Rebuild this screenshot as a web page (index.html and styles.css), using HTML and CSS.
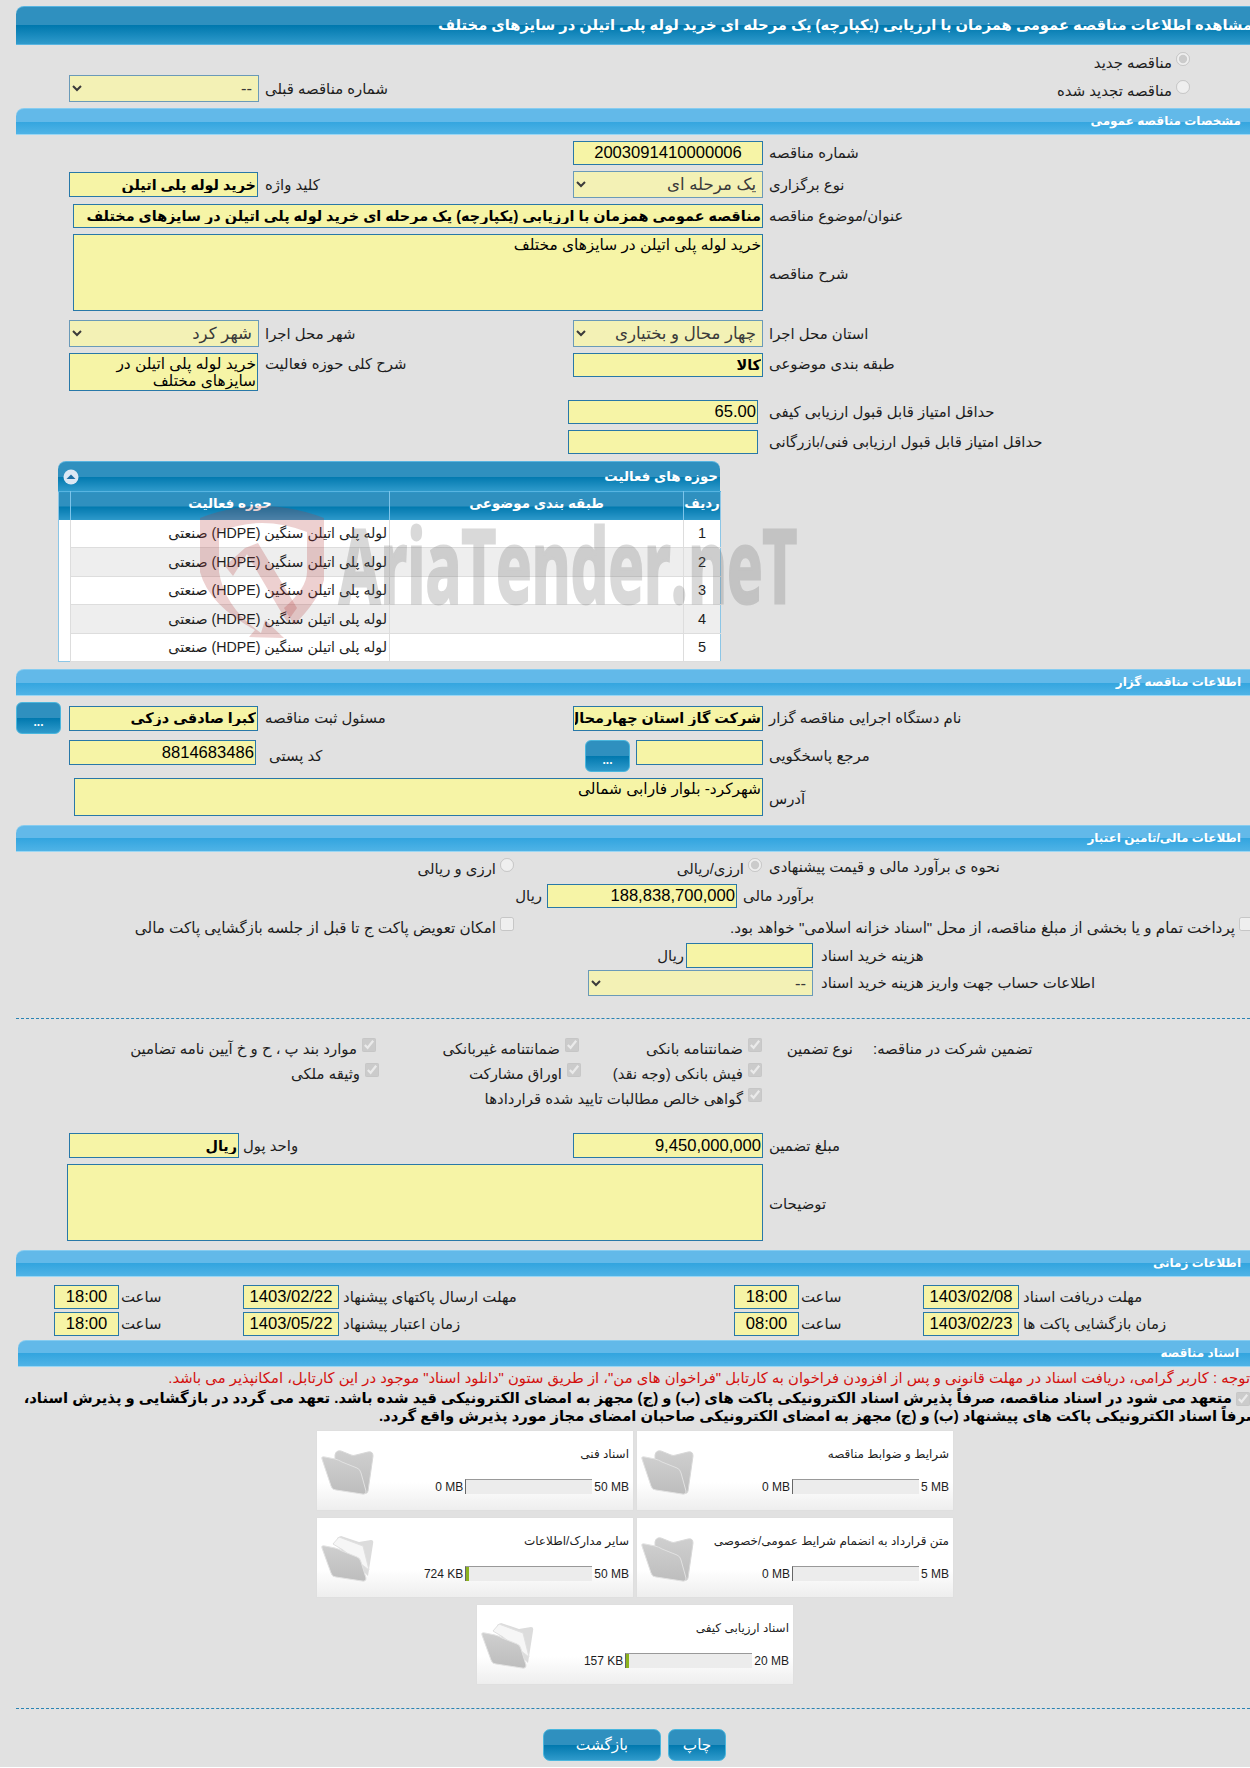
FILE: index.html
```html
<!DOCTYPE html>
<html lang="fa">
<head>
    <meta charset="UTF-8">
    <title>مشاهده اطلاعات مناقصه</title>
    <link rel="stylesheet" href="styles.css">
</head>
<body>
<div class="page">
<main class="wrap">

    <h1 class="title-bar"><span>مشاهده اطلاعات مناقصه عمومی همزمان با ارزیابی (یکپارچه) یک مرحله ای خرید لوله پلی اتیلن در سایزهای مختلف</span></h1>

    <div class="choice-row choice-first">
        <label class="choice"><input type="radio" name="kind" disabled checked><span>مناقصه جدید</span></label>
    </div>
    <div class="grid-row mt-9">
        <select class="field w-190" dir="rtl" disabled><option>--</option></select>
        <label class="cap">شماره مناقصه قبلی</label>
        <span></span>
        <label class="choice choice-renew"><input type="radio" name="kind" disabled><span>مناقصه تجدید شده</span></label>
    </div>

    <h2 class="section mt-6">مشخصات مناقصه عمومی</h2>

    <div class="grid-row mt-6">
        <span></span><span></span>
        <input class="field num center" dir="rtl" readonly value="2003091410000006">
        <label class="cap">شماره مناقصه</label>
    </div>
    <div class="grid-row mt-6 row-27">
        <input class="field w-189 h-25 heavy" dir="rtl" readonly value="خرید لوله پلی اتیلن">
        <label class="cap">کلید واژه</label>
        <select class="field" dir="rtl" disabled><option>یک مرحله ای</option></select>
        <label class="cap">نوع برگزاری</label>
    </div>
    <div class="grid-row mt-6">
        <input class="field span-3 w-690 heavy" dir="rtl" readonly value="مناقصه عمومی همزمان با ارزیابی (یکپارچه) یک مرحله ای خرید لوله پلی اتیلن در سایزهای مختلف">
        <label class="cap">عنوان/موضوع مناقصه</label>
    </div>
    <div class="grid-row mt-6">
        <textarea class="field span-3 w-690 h-77" dir="rtl" readonly>خرید لوله پلی اتیلن در سایزهای مختلف</textarea>
        <label class="cap cap-down">شرح مناقصه</label>
    </div>
    <div class="grid-row mt-9 row-27">
        <select class="field w-190" dir="rtl" disabled><option>شهر کرد</option></select>
        <label class="cap">شهر محل اجرا</label>
        <select class="field" dir="rtl" disabled><option>چهار محال و بختیاری</option></select>
        <label class="cap">استان محل اجرا</label>
    </div>
    <div class="grid-row mt-6 row-top">
        <textarea class="field w-189 h-38" dir="rtl" readonly>خرید لوله پلی اتیلن در سایزهای مختلف</textarea>
        <label class="cap">شرح کلی حوزه فعالیت</label>
        <input class="field heavy" dir="rtl" readonly value="کالا">
        <label class="cap">طبقه بندی موضوعی</label>
    </div>
    <div class="grid-row mt-9">
        <span></span><span></span>
        <input class="field num shift-5" dir="rtl" readonly value="65.00">
        <label class="cap">حداقل امتیاز قابل قبول ارزیابی کیفی</label>
    </div>
    <div class="grid-row mt-6">
        <span></span><span></span>
        <input class="field shift-5" dir="rtl" readonly>
        <label class="cap">حداقل امتیاز قابل قبول ارزیابی فنی/بازرگانی</label>
    </div>

    <section class="activity">
        <div class="activity-head">
            <svg class="collapse" viewBox="0 0 16 16"><circle cx="8" cy="8" r="7.5" fill="#dce8f4"/><path d="M3.5 10 L8 5.5 L12.5 10 Z" fill="#1d6fa5"/></svg>
            <span>حوزه های فعالیت</span>
        </div>
        <table class="activity-table" dir="rtl">
            <thead>
                <tr><th class="c-idx">ردیف</th><th class="c-cat">طبقه بندی موضوعی</th><th class="c-act">حوزه فعالیت</th><th class="c-pad"></th></tr>
            </thead>
            <tbody>
                <tr><td class="c-idx">1</td><td></td><td>لوله پلی اتیلن سنگین (HDPE) صنعتی</td><td class="c-pad"></td></tr>
                <tr><td class="c-idx">2</td><td></td><td>لوله پلی اتیلن سنگین (HDPE) صنعتی</td><td class="c-pad"></td></tr>
                <tr><td class="c-idx">3</td><td></td><td>لوله پلی اتیلن سنگین (HDPE) صنعتی</td><td class="c-pad"></td></tr>
                <tr><td class="c-idx">4</td><td></td><td>لوله پلی اتیلن سنگین (HDPE) صنعتی</td><td class="c-pad"></td></tr>
                <tr><td class="c-idx">5</td><td></td><td>لوله پلی اتیلن سنگین (HDPE) صنعتی</td><td class="c-pad"></td></tr>
            </tbody>
        </table>
        <svg class="watermark" viewBox="0 0 600 140">
            <g fill="#b43c3c" fill-opacity="0.24">
                <path d="M1 18 Q62 -6 125 18 L125 80 Q120 100 95 125 L85 108 Q108 88 108 72 L108 32 Q62 14 20 32 L20 72 Q26 108 62 133 L66 120 L85 138 L50 137 L56 130 Q10 105 1 72 Z"/>
                <path d="M46 48 L59 43 L98 108 L88 122 L48 54 L34 76 L26 66 Z"/>
            </g>
            <text class="watermark-text" x="140" y="103" textLength="458" lengthAdjust="spacingAndGlyphs">AriaTender.neT</text>
        </svg>
    </section>

    <h2 class="section mt-7">اطلاعات مناقصه گزار</h2>

    <div class="grid-row mt-6 row-32">
        <div class="with-btn">
            <button class="dots" type="button">...</button>
            <input class="field w-189 heavy h-25" dir="rtl" readonly value="کبرا صادقی دزکی">
        </div>
        <label class="cap">مسئول ثبت مناقصه</label>
        <input class="field heavy h-25" dir="rtl" readonly value="شرکت گاز استان چهارمحال و بختیاری">
        <label class="cap">نام دستگاه اجرایی مناقصه گزار</label>
    </div>
    <div class="grid-row mt-6 row-32 row-top">
        <input class="field num w-187 mt-3 h-25" dir="rtl" readonly value="8814683486">
        <label class="cap cap-low cap-postal">کد پستی</label>
        <div class="with-btn with-btn-right">
            <button class="dots" type="button">...</button>
            <input class="field w-127 h-25" dir="rtl" readonly>
        </div>
        <label class="cap cap-low">مرجع پاسخگویی</label>
    </div>
    <div class="grid-row mt-6">
        <textarea class="field span-3 w-689 h-38" dir="rtl" readonly>شهرکرد- بلوار فارابی شمالی</textarea>
        <label class="cap cap-down">آدرس</label>
    </div>

    <h2 class="section mt-9">اطلاعات مالی/تامین اعتبار</h2>

    <div class="pick-row pick-radio mt-6 h-16">
        <label class="choice"><input type="radio" name="cur" disabled><span>ارزی و ریالی</span></label>
        <label class="choice"><input type="radio" name="cur" disabled checked><span>ارزی/ریالی</span></label>
        <label class="cap cap-7">نحوه ی برآورد مالی و قیمت پیشنهادی</label>
    </div>
    <div class="unit-row unit-estimate mt-10">
        <span class="cap unit">ریال</span>
        <input class="field num" dir="rtl" readonly value="188,838,700,000">
        <label class="cap">برآورد مالی</label>
    </div>
    <div class="pick-row pick-check mt-9 h-14">
        <label class="choice"><input type="checkbox" disabled><span>امکان تعویض پاکت ج تا قبل از جلسه بازگشایی پاکت مالی</span></label>
        <label class="choice"><input type="checkbox" disabled><span>پرداخت تمام و یا بخشی از مبلغ مناقصه، از محل "اسناد خزانه اسلامی" خواهد بود.</span></label>
    </div>
    <div class="unit-row unit-cost mt-12">
        <span class="cap unit unit-near">ریال</span>
        <input class="field w-127 h-25" dir="rtl" readonly>
        <label class="cap cap-8">هزینه خرید اسناد</label>
    </div>
    <div class="unit-row unit-account mt-2">
        <span></span>
        <select class="field w-225 h-26" dir="rtl" disabled><option>--</option></select>
        <label class="cap cap-8">اطلاعات حساب جهت واریز هزینه خرید اسناد</label>
    </div>

    <hr class="dotted rule-top">

    <div class="guarantee" dir="ltr">
        <label class="check"><input type="checkbox" disabled checked><span>موارد بند پ ، ح و خ آیین نامه تضامین</span></label>
        <label class="check"><input type="checkbox" disabled checked><span>ضمانتنامه غیربانکی</span></label>
        <label class="check"><input type="checkbox" disabled checked><span>ضمانتنامه بانکی</span></label>
        <label class="cap cap-type">نوع تضمین</label>
        <label class="cap cap-guar">تضمین شرکت در مناقصه:</label>

        <label class="check check-out-3"><input type="checkbox" disabled checked><span>وثیقه ملکی</span></label>
        <label class="check check-out-2"><input type="checkbox" disabled checked><span>اوراق مشارکت</span></label>
        <label class="check"><input type="checkbox" disabled checked><span>فیش بانکی (وجه نقد)</span></label>
        <span></span><span></span>

        <span></span><span></span>
        <label class="check"><input type="checkbox" disabled checked><span>گواهی خالص مطالبات تایید شده قراردادها</span></label>
    </div>

    <div class="grid-row mt-30">
        <input class="field w-170 h-25 heavy" dir="rtl" readonly value="ریال">
        <label class="cap cap-unit">واحد پول</label>
        <input class="field num h-25" dir="rtl" readonly value="9,450,000,000">
        <label class="cap">مبلغ تضمین</label>
    </div>
    <div class="grid-row mt-6">
        <textarea class="field span-3 w-696 h-77" dir="rtl" readonly></textarea>
        <label class="cap cap-down">توضیحات</label>
    </div>

    <h2 class="section mt-9">اطلاعات زمانی</h2>

    <div class="dates mt-8">
        <input class="field time num" dir="rtl" readonly value="18:00">
        <label class="cap cap-2">ساعت</label>
        <input class="field date num" dir="rtl" readonly value="1403/02/22">
        <label class="cap cap-3">مهلت ارسال پاکتهای پیشنهاد</label>
        <input class="field time num" dir="rtl" readonly value="18:00">
        <label class="cap cap-2">ساعت</label>
        <input class="field date num" dir="rtl" readonly value="1403/02/08">
        <label class="cap cap-3">مهلت دریافت اسناد</label>
    </div>
    <div class="dates mt-3">
        <input class="field time num" dir="rtl" readonly value="18:00">
        <label class="cap cap-2">ساعت</label>
        <input class="field date num" dir="rtl" readonly value="1403/05/22">
        <label class="cap cap-3">زمان اعتبار پیشنهاد</label>
        <input class="field time num" dir="rtl" readonly value="08:00">
        <label class="cap cap-2">ساعت</label>
        <input class="field date num" dir="rtl" readonly value="1403/02/23">
        <label class="cap cap-3">زمان بازگشایی پاکت ها</label>
    </div>

    <h2 class="section section-docs mt-4">اسناد مناقصه</h2>

    <p class="notice-red" dir="rtl">توجه : کاربر گرامی، دریافت اسناد در مهلت قانونی و پس از افزودن فراخوان به کارتابل "فراخوان های من"، از طریق ستون "دانلود اسناد" موجود در این کارتابل، امکانپذیر می باشد.</p>
    <p class="notice-bold" dir="rtl"><input type="checkbox" disabled checked>متعهد می شود در اسناد مناقصه، صرفاً پذیرش اسناد الکترونیکی پاکت های (ب) و (ج) مجهز به امضای الکترونیکی قید شده باشد. تعهد می گردد در بازگشایی و پذیرش اسناد،<br>صرفاً اسناد الکترونیکی پاکت های پیشنهاد (ب) و (ج) مجهز به امضای الکترونیکی صاحبان امضای مجاز مورد پذیرش واقع گردد.</p>

    <section class="docs" dir="rtl">
        <article class="doc">
            <div class="doc-body">
                <div class="doc-name">شرایط و ضوابط مناقصه</div>
                <div class="doc-meter"><span>5 MB</span><i class="bar"></i><span>0 MB</span></div>
            </div>
            <svg class="folder" viewBox="0 0 54 46"><use href="#folder-shut"/></svg>
        </article>
        <article class="doc">
            <div class="doc-body">
                <div class="doc-name">اسناد فنی</div>
                <div class="doc-meter"><span>50 MB</span><i class="bar"></i><span>0 MB</span></div>
            </div>
            <svg class="folder" viewBox="0 0 54 46"><use href="#folder-shut"/></svg>
        </article>
        <article class="doc">
            <div class="doc-body">
                <div class="doc-name">متن قرارداد به انضمام شرایط عمومی/خصوصی</div>
                <div class="doc-meter"><span>5 MB</span><i class="bar"></i><span>0 MB</span></div>
            </div>
            <svg class="folder" viewBox="0 0 54 46"><use href="#folder-shut"/></svg>
        </article>
        <article class="doc">
            <div class="doc-body">
                <div class="doc-name">سایر مدارک/اطلاعات</div>
                <div class="doc-meter"><span>50 MB</span><i class="bar"><b></b></i><span>724 KB</span></div>
            </div>
            <svg class="folder" viewBox="0 0 54 46"><use href="#folder-full"/></svg>
        </article>
        <article class="doc doc-last">
            <div class="doc-body">
                <div class="doc-name">اسناد ارزیابی کیفی</div>
                <div class="doc-meter"><span>20 MB</span><i class="bar"><b></b></i><span>157 KB</span></div>
            </div>
            <svg class="folder" viewBox="0 0 54 46"><use href="#folder-full"/></svg>
        </article>
    </section>

    <hr class="dotted rule-bottom">

    <div class="actions">
        <button class="action action-back" type="button">بازگشت</button>
        <button class="action action-print" type="button">چاپ</button>
    </div>
</main>
</div>

<svg class="defs" width="0" height="0">
    <defs>
        <linearGradient id="fold" x1="0" y1="0" x2="0" y2="1">
            <stop offset="0" stop-color="#cfcfcf"/>
            <stop offset="1" stop-color="#bdbdbd"/>
        </linearGradient>
        <g id="folder-shut">
            <path d="M14 6 Q15 1 20 2 L30 6 Q32 7 35 6 L47 3 Q52 2 52 7 L47 42 Q46 46 42 43 L14 10 Z" fill="url(#fold)" stroke="#d8d8d8"/>
            <path d="M1 10 Q0 7 4 8 L14 10 Q18 11 21 13 L36 19 Q39 20 40 24 L45 42 Q45 46 41 45 L15 41 Q11 41 10 37 Z" fill="url(#fold)" stroke="#e2e2e2"/>
        </g>
        <g id="folder-full">
            <path d="M16 2 L20 0 L38 6 L50 4 Q53 4 52 8 L47 40 L18 12 Z" fill="#dcdcdc"/>
            <path d="M12 8 L18 1 L42 10 L48 34 L22 14 Z" fill="#f6f6f6" stroke="#e0e0e0"/>
            <path d="M1 12 Q0 9 4 10 L14 12 Q18 13 21 15 L36 21 Q39 22 40 26 L45 42 Q45 46 41 45 L15 41 Q11 41 10 37 Z" fill="url(#fold)" stroke="#e2e2e2"/>
        </g>
    </defs>
</svg>
</body>
</html>
```

FILE: styles.css
```css
html, body {
    margin: 0;
    padding: 0;
    background: #fff;
    overflow: hidden;
}

body {
    font-family: "Liberation Sans", "DejaVu Sans", sans-serif;
    font-size: 14.9px;
    color: #1d1d1d;
}

.page {
    height: 1767px;
    background: #e1e1e1;
    padding: 6px 0 0 16px;
    box-sizing: border-box;
    overflow: hidden;
}

.wrap {
    width: 1244px;
}

.defs {
    position: absolute;
}

/* bars */
.title-bar {
    margin: 0;
    height: 39px;
    box-sizing: border-box;
    border-radius: 8px 0 0 0;
    border-top: 1px solid #58b4e0;
    border-bottom: 1px solid #58b4e0;
    background: linear-gradient(#2f90bf 0, #2f90bf 50%, #0078ae 50%, #2f9acb 100%);
    color: #fff;
    font-size: 14.7px;
    font-weight: bold;
    line-height: 36px;
    white-space: nowrap;
    direction: rtl;
    overflow: hidden;
}

.title-bar span {
    display: inline-block;
    margin-right: 8px;
}

.section {
    margin-bottom: 0;
    height: 27px;
    box-sizing: border-box;
    padding-right: 19px;
    border-radius: 8px 0 0 0;
    border-top: 1px solid #86ccf0;
    border-bottom: 1px solid #9ad6f3;
    background: linear-gradient(#62b9e9 0, #62b9e9 50%, #33a5df 50%, #4fb3e6 100%);
    color: #fff;
    font-size: 12px;
    font-weight: bold;
    line-height: 25px;
    direction: rtl;
}

.section-docs {
    margin-left: 2px;
    padding-right: 21px;
}

.mt-2 { margin-top: 2px; }
.mt-3 { margin-top: 3px; }
.mt-4 { margin-top: 4px; }
.mt-6 { margin-top: 6px; }
.mt-7 { margin-top: 7px; }
.mt-8 { margin-top: 8px; }
.mt-9 { margin-top: 9px; }
.mt-10 { margin-top: 10px; }
.mt-12 { margin-top: 12px; }
.mt-30 { margin-top: 30px; }

/* form rows */
.grid-row {
    display: grid;
    grid-template-columns: 243px 314px 190px 1fr;
    align-items: center;
    direction: ltr;
}

.row-27 { height: 27px; }
.row-32 { height: 32px; }
.row-top { align-items: start; }
.row-top .cap { margin-top: 2px; }
.row-top .cap-low { margin-top: 7px; }

.cap {
    direction: rtl;
    text-align: left;
    padding-left: 6px;
    white-space: nowrap;
}

.cap-down { margin-top: 3px; }
.cap-7 { padding-left: 7px; }
.cap-8 { padding-left: 8px; }

.field {
    display: block;
    box-sizing: border-box;
    width: 190px;
    height: 24px;
    margin: 0;
    padding: 0 1px;
    border: 1px solid #2878a8;
    border-radius: 0;
    background: #f6f4a6;
    color: #000;
    font-family: inherit;
    font-size: 14.4px;
    outline: none;
}

select.field {
    height: 27px;
    padding: 0 2px;
    border: 1px solid #6a9ab8;
    opacity: 1;
    background: #f3f1b5;
    color: #3a3a3a;
    font-size: 16.6px;
}

textarea.field {
    resize: none;
    overflow: hidden;
    font-size: 15.4px;
    line-height: 17px;
    padding: 1px;
}

.num {
    font-size: 16.6px;
}

.center { text-align: center; }
.heavy { font-weight: bold; }

.w-127 { width: 127px; }
.w-170 { width: 170px; justify-self: end; margin-right: 20px; }
.w-187 { width: 187px; justify-self: end; margin-right: 3px; }
.w-189 { width: 189px; justify-self: end; margin-right: 1px; }
.w-190 { width: 190px; justify-self: end; }
.w-225 { width: 225px; }
.w-689 { width: 689px; }
.w-690 { width: 690px; }
.w-696 { width: 696px; }

.h-25 { height: 25px; }
.h-26 { height: 26px !important; }
.h-38 { height: 38px; }
.h-77 { height: 77px; }
.h-14 { height: 14px; }
.h-16 { height: 16px; }

.span-3 {
    grid-column: 1 / 4;
    justify-self: end;
}

.shift-5 {
    margin-left: -5px;
}

.cap-postal {
    padding-left: 10px;
}

.cap-unit {
    padding-left: 4px;
    margin-left: -20px;
}

/* radio and checkbox labels */
.choice {
    display: inline-flex;
    align-items: flex-start;
    white-space: nowrap;
    direction: rtl;
}

.choice input,
.check input {
    margin: 0;
    width: 14px;
    height: 14px;
    flex: none;
}

.choice span {
    margin: 2px 4px 0 0;
    line-height: 18px;
}

.choice-row {
    display: flex;
    justify-content: flex-end;
    direction: ltr;
    height: 14px;
    width: 1174px;
}

.choice-first {
    margin-top: 7px;
}

.choice-renew {
    justify-self: end;
    align-self: start;
    margin: 5px 70px 0 0;
}

.with-btn {
    display: flex;
    justify-content: space-between;
    align-items: center;
    height: 32px;
}

.with-btn-right {
    width: 178px;
    margin-left: 12px;
    align-items: flex-start;
}

.dots {
    width: 45px;
    height: 32px;
    padding: 8px 0 0;
    border: 1px solid #4ab6dd;
    border-radius: 6px;
    background: linear-gradient(#2f90bf 0, #2f90bf 50%, #0078ae 50%, #2f9acb 100%);
    color: #fff;
    font: bold 12px "Liberation Sans", sans-serif;
}

/* activity table */
.activity {
    position: relative;
    width: 662px;
    height: 201px;
    margin: 7px 0 0 42px;
}

.activity-head {
    display: flex;
    justify-content: space-between;
    align-items: center;
    box-sizing: border-box;
    height: 30px;
    padding: 0 2px 0 5px;
    border-radius: 8px 8px 0 0;
    border-top: 1px solid #58b4e0;
    background: linear-gradient(#2f90bf 0, #2f90bf 50%, #0078ae 50%, #2f9acb 100%);
    color: #fff;
    font-size: 13.4px;
    font-weight: bold;
    direction: rtl;
}

.collapse {
    width: 16px;
    height: 16px;
    order: 2;
}

.activity-table {
    width: 662px;
    table-layout: fixed;
    border-collapse: collapse;
    background: #fff;
    border-left: 1px solid #8cc6e6;
    border-right: 1px solid #8cc6e6;
    border-bottom: 1px solid #8cc6e6;
}

.activity-table th {
    box-sizing: border-box;
    height: 28px;
    padding: 0 0 5px;
    border-left: 1px solid #7cc4ea;
    border-top: 1px solid #58b4e0;
    background: linear-gradient(#2f90bf 0, #2f90bf 50%, #0078ae 50%, #2f9acb 100%);
    color: #fff;
    font-size: 13.4px;
}

.activity-table td {
    height: 28.4px;
    padding: 0 2px;
    box-sizing: border-box;
    border-left: 1px solid #ddd;
    border-bottom: 1px solid #ddd;
    text-align: right;
    font-size: 14.2px;
}

.activity-table tbody tr:nth-child(even) td {
    background: #eee;
}

.activity-table td.c-pad,
.activity-table tbody tr:nth-child(even) td.c-pad {
    background: #fff;
    border-bottom: 0;
    border-left: 0;
}

.activity-table td.c-idx {
    text-align: center;
    font-size: 14.5px;
}

.activity-table th.c-pad {
    border-left: 0;
}

.c-idx { width: 37px; }
.c-cat { width: 294px; }
.c-act { width: 319px; }
.c-pad { width: 12px; }

.watermark {
    position: absolute;
    left: 141px;
    top: 39px;
    width: 600px;
    height: 140px;
    pointer-events: none;
}

.watermark-text {
    font-family: "Open Sans", sans-serif;
    font-weight: bold;
    font-size: 103px;
    fill: #666;
    stroke: #666;
    stroke-width: 3px;
    opacity: 0.24;
}

/* financial rows */
.pick-row {
    display: grid;
    direction: ltr;
    align-items: start;
}

.pick-row .choice {
    justify-self: end;
}

.pick-radio { grid-template-columns: 498px 248px 1fr; }
.pick-check { grid-template-columns: 498px 739px; }

.pick-check .choice span {
    font-size: 15.2px;
}

.unit-row {
    display: grid;
    direction: ltr;
    align-items: center;
}

.unit-estimate { grid-template-columns: 531px 190px 1fr; }
.unit-cost { grid-template-columns: 670px 127px 1fr; }
.unit-account { grid-template-columns: 572px 225px 1fr; }

.unit {
    justify-self: end;
    padding: 0 5px 0 0;
}

.unit-near {
    padding-right: 2px;
}

.dotted {
    height: 0;
    margin: 0;
    border: 0;
    border-top: 1px dashed #2b83b3;
}

.rule-top { margin-top: 22px; }
.rule-bottom { margin-top: 24px; }

/* guarantee */
.guarantee {
    display: grid;
    grid-template-columns: 360px 203px 183px 91px 1fr;
    grid-auto-rows: 15px;
    row-gap: 10px;
    margin-top: 19px;
}

.check {
    display: flex;
    align-items: flex-start;
    direction: rtl;
    white-space: nowrap;
}

.check span {
    margin: 2px 5px 0 0;
    line-height: 18px;
}

.check-out-2 { margin-right: -2px; }
.check-out-3 { margin-right: -3px; }

.guarantee .cap {
    line-height: 18px;
    margin-top: 2px;
}

.cap-type {
    padding-left: 25px;
}

.cap-guar {
    padding-left: 20px;
}

/* dates */
.dates {
    display: grid;
    grid-template-columns: 65px 124px 96px 395px 65px 124px 96px 1fr;
    padding-left: 38px;
    direction: ltr;
    align-items: center;
}

.time { width: 65px; text-align: center; }
.date { width: 96px; text-align: center; }

.dates .cap-2 { padding-left: 2px; }
.dates .cap-3 { padding-left: 4px; }

/* notices */
.notice-red {
    margin: 3px 0 0;
    padding-right: 10px;
    color: #d3110f;
    font-size: 14.8px;
    line-height: 17px;
    white-space: nowrap;
}

.notice-bold {
    height: 38px;
    margin: 2px 0 0;
    text-indent: 10px;
    font-size: 14.8px;
    font-weight: bold;
    color: #000;
    line-height: 18px;
    white-space: nowrap;
}

.notice-bold input {
    width: 14px;
    height: 14px;
    margin: 0 0 0 4px;
    vertical-align: -3px;
}

/* documents */
.docs {
    display: grid;
    grid-template-columns: 316px 316px;
    justify-content: start;
    gap: 8px 4px;
    width: 636px;
    margin: 4px 0 0 301px;
}

.doc {
    display: flex;
    direction: ltr;
    flex-direction: row-reverse;
    justify-content: space-between;
    height: 79px;
    box-sizing: border-box;
    padding: 15px 4px 0 4px;
    background: linear-gradient(#fff 0, #fff 65%, #eee 100%);
    box-shadow: 0 0 1px #d4d4d4;
}

.doc-last {
    grid-column: 1 / 3;
    justify-self: center;
    width: 316px;
}

.doc-name {
    direction: rtl;
    text-align: right;
    font-size: 12px;
    height: 28px;
    line-height: 15px;
    white-space: nowrap;
    margin-top: 1px;
}

.doc-meter {
    display: flex;
    flex-direction: row-reverse;
    align-items: center;
    justify-content: flex-start;
    gap: 2px;
    font-size: 12px;
    margin-top: 4px;
}

.bar {
    display: block;
    width: 127px;
    height: 15px;
    border-top: 1px solid #999;
    border-left: 1px solid #666;
    box-sizing: border-box;
    background: #ececec;
}

.bar b {
    display: block;
    width: 3px;
    height: 14px;
    background: #8cb31f;
}

.folder {
    width: 54px;
    height: 46px;
    margin-top: 3px;
}

/* buttons */
.actions {
    display: flex;
    gap: 7px;
    margin: 20px 0 0 527px;
}

.action {
    height: 32px;
    border: 1px solid #4ab6dd;
    border-radius: 7px;
    background: linear-gradient(#2f90bf 0, #2f90bf 50%, #0078ae 50%, #2f9acb 100%);
    color: #fff;
    font-family: inherit;
    font-size: 15.3px;
}

.action-back { width: 118px; }
.action-print { width: 58px; }
```
